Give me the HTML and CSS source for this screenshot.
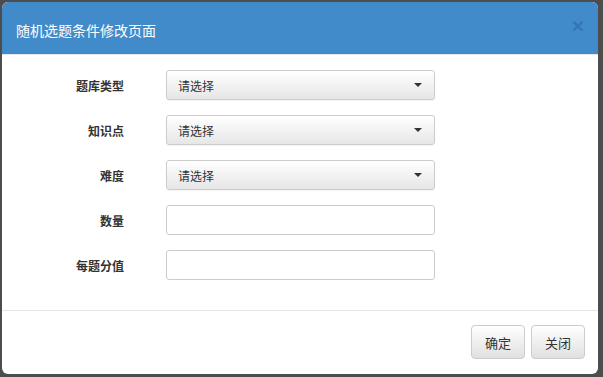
FILE: index.html
```html
<!DOCTYPE html>
<html lang="zh">
<head>
  <meta charset="UTF-8" />
  <title>随机选题条件修改页面</title>
  <link rel="stylesheet" href="styles.css">
</head>
<body>
  <div class="modal">
    <div class="modal-header">
      <h4 class="modal-title">随机选题条件修改页面</h4>
      <button class="close" type="button">&times;</button>
    </div>

    <form class="modal-body">
      <div class="form-row">
        <label>题库类型</label>
        <div class="select"><span>请选择</span><i class="caret"></i></div>
      </div>
      <div class="form-row">
        <label>知识点</label>
        <div class="select"><span>请选择</span><i class="caret"></i></div>
      </div>
      <div class="form-row">
        <label>难度</label>
        <div class="select"><span>请选择</span><i class="caret"></i></div>
      </div>
      <div class="form-row">
        <label>数量</label>
        <input type="text" class="field" />
      </div>
      <div class="form-row">
        <label>每题分值</label>
        <input type="text" class="field" />
      </div>
    </form>

    <div class="modal-footer">
      <button class="btn" type="button">确定</button>
      <button class="btn" type="button">关闭</button>
    </div>
  </div>
</body>
</html>
```

FILE: styles.css
```css
html, body {
  margin: 0;
  height: 100%;
}

body {
  background: #4d4d4d;
  font-family: "Liberation Sans", "Noto Sans CJK SC", sans-serif;
  color: #333;
  padding: 2px 5px 3px 2px;
  box-sizing: border-box;
}

.modal {
  height: 372px;
  background: #fff;
  border-radius: 6px;
  overflow: hidden;
  display: flex;
  flex-direction: column;
}

.modal-header {
  height: 53px;
  flex-shrink: 0;
  background: #428bca;
  border-bottom: 1px solid #e5e5e5;
  display: flex;
  align-items: center;
  justify-content: space-between;
  padding: 0 14px 0 14px;
  box-sizing: border-box;
}

.modal-title {
  margin: 0;
  font-size: 14px;
  font-weight: normal;
  color: #fff;
  padding-top: 3px;
}

.close {
  background: none;
  border: none;
  padding: 0;
  font-size: 21px;
  font-weight: bold;
  line-height: 1;
  color: #2f6ea8;
  opacity: 0.7;
  margin-top: -5px;
  cursor: pointer;
}

.modal-body {
  flex: 1;
  margin: 0;
  padding: 15px 0 0 0;
  display: flex;
  flex-direction: column;
  gap: 15px;
}

.form-row {
  display: flex;
  align-items: center;
  height: 30px;
}

.form-row label {
  width: 122px;
  text-align: right;
  font-size: 12px;
  font-weight: bold;
  color: #333;
  margin-right: 42px;
}

.select, .field {
  width: 269px;
  height: 30px;
  box-sizing: border-box;
  border: 1px solid #ccc;
  border-radius: 3px;
  font-size: 12px;
}

.select {
  display: flex;
  align-items: center;
  justify-content: space-between;
  padding: 0 12px 0 11px;
  background: linear-gradient(to bottom, #fff 0%, #e6e6e6 100%);
  box-shadow: 0 1px 1px rgba(0, 0, 0, 0.05);
  color: #333;
}

.caret {
  width: 0;
  height: 0;
  border-left: 4px solid transparent;
  border-right: 4px solid transparent;
  border-top: 4px solid #333;
}

.field {
  background: #fff;
  padding: 0 10px;
  font-family: inherit;
}

.modal-footer {
  border-top: 1px solid #e5e5e5;
  height: 64px;
  flex-shrink: 0;
  box-sizing: border-box;
  display: flex;
  justify-content: flex-end;
  align-items: flex-start;
  gap: 6px;
  padding: 14px 13px 0 0;
}

.btn {
  width: 54px;
  height: 34px;
  border: 1px solid #ccc;
  border-radius: 4px;
  background: linear-gradient(to bottom, #fff 0%, #e0e0e0 100%);
  font-family: inherit;
  font-size: 13px;
  color: #333;
  cursor: pointer;
}
```
